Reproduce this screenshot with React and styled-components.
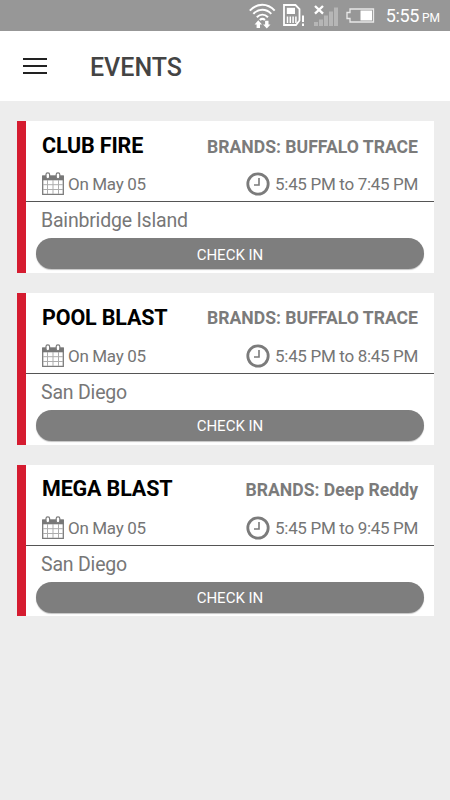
import styled, { createGlobalStyle } from "styled-components";

const events = [
  { id: 1, title: "CLUB FIRE", brand: "BUFFALO TRACE", date: "On May 05", time: "5:45 PM to 7:45 PM", place: "Bainbridge Island" },
  { id: 2, title: "POOL BLAST", brand: "BUFFALO TRACE", date: "On May 05", time: "5:45 PM to 8:45 PM", place: "San Diego" },
  { id: 3, title: "MEGA BLAST", brand: "Deep Reddy", date: "On May 05", time: "5:45 PM to 9:45 PM", place: "San Diego" },
];

function WifiIcon() {
  return (
    <svg width="28" height="26" viewBox="0 0 28 26" fill="none" stroke="#fff" strokeWidth="2">
      <path d="M.8 7.6C8-.2 18.5-.2 25.7 7.6M4.3 10.9c5.2-5.4 12.8-5.4 18 0M7.8 14.2c3.4-3.3 7.8-3.3 11.2 0M10.8 17c1.5-1.3 3.7-1.3 5.2 0" />
      <path d="M9.3 17.2l3.7 4.2h-2V25H7.6v-3.6h-2zM17.8 25.6l-3.7-4.2h2v-3.6h3.4v3.6h2z" fill="#fff" stroke="none" />
    </svg>
  );
}

function StorageIcon() {
  return (
    <svg width="22" height="23" viewBox="0 0 22 23" fill="none" stroke="#fff">
      <path d="M1 1h11.5l4 4v11.5L13 21H1z" strokeWidth="1.8" />
      <path d="M3.8 3.8H12V10H3.8z" fill="#fff" stroke="none" />
      <path d="M4.5 12.5V19M7.3 12.5V19M10.1 12.5V19M12.9 12.5V19" strokeWidth="1.5" />
      <path d="M20 11.5v6.5M20 19.5V22" strokeWidth="2" />
    </svg>
  );
}

function SignalIcon() {
  return (
    <svg width="26" height="23" viewBox="0 0 26 23">
      <path d="M2 2l8 7.6M10 2L2 9.6" stroke="#fff" strokeWidth="2.4" />
      <path d="M1 18h4v4H1zM6 15.5h4V22H6zM11 11.5h4V22h-4zM16 7.5h4V22h-4zM21 3.5h4V22h-4z" fill="#b6b6b6" />
    </svg>
  );
}

function BatteryIcon() {
  return (
    <svg width="29" height="15" viewBox="0 0 29 15">
      <path d="M4 1h23.5v13H4v-3.5H1v-6h3z" fill="none" stroke="#e8e8e8" strokeWidth="1.3" />
      <path d="M14.5 2.5H26v10H14.5z" fill="#fff" />
    </svg>
  );
}

function CalendarIcon() {
  return (
    <svg width="22" height="24" viewBox="0 0 22 24">
      <path d="M.7 4.5h20.6v17.8H.7z" fill="#fff" stroke="#7b7b7b" strokeWidth="1.3" />
      <path d="M.2 3.4h21.6v4.9H.2z" fill="#777" />
      <path d="M5.5 8v14M11 8v14M16.5 8v14M1 12.7h20M1 17.5h20" stroke="#adadad" strokeWidth="1" />
      <rect x="4" y=".8" width="3.6" height="6" rx="1.7" fill="#fff" stroke="#7b7b7b" strokeWidth="1.2" />
      <rect x="14.2" y=".8" width="3.6" height="6" rx="1.7" fill="#fff" stroke="#7b7b7b" strokeWidth="1.2" />
    </svg>
  );
}

function ClockIcon() {
  return (
    <svg width="24" height="24" viewBox="0 0 24 24" fill="none" stroke="#7b7b7b">
      <circle cx="12" cy="12" r="10.2" strokeWidth="2.8" />
      <path d="M13 6v7H8" strokeWidth="1.6" />
    </svg>
  );
}

function App() {
  return (
    <>
      <GlobalStyle />
      <StatusBar>
        <WifiIcon />
        <StorageIcon />
        <SignalIcon />
        <BatteryIcon />
        <StatusTime>
          5:55 <small>PM</small>
        </StatusTime>
      </StatusBar>
      <Header>
        <MenuButton aria-label="Menu">
          <span />
          <span />
          <span />
        </MenuButton>
        <h1>EVENTS</h1>
      </Header>
      <EventList>
        {events.map((event) => (
          <Card key={event.id}>
            <Row>
              <Title>{event.title}</Title>
              <Brand>BRANDS: {event.brand}</Brand>
            </Row>
            <Details>
              <Info $gap="4px">
                <CalendarIcon />
                {event.date}
              </Info>
              <Info $gap="5px">
                <ClockIcon />
                {event.time}
              </Info>
            </Details>
            <Place>{event.place}</Place>
            <CheckIn>CHECK IN</CheckIn>
          </Card>
        ))}
      </EventList>
    </>
  );
}

const GlobalStyle = createGlobalStyle`
  * {
    box-sizing: border-box;
  }

  body {
    margin: 0;
    min-height: 100vh;
    background: #ededed;
    font-family: Roboto, sans-serif;
  }

  svg {
    display: block;
    flex: none;
  }
`;

const StatusBar = styled.div`
  display: flex;
  justify-content: flex-end;
  align-items: center;
  height: 31px;
  padding-right: 10px;
  background: #979797;
  color: #fff;

  svg:nth-child(2) {
    margin-left: 6px;
  }

  svg:nth-child(3) {
    margin: 0 7px 0 8px;
  }
`;

const StatusTime = styled.div`
  margin-left: 11px;
  padding-top: 3px;
  font-size: 18px;
  letter-spacing: -0.4px;
  line-height: 28px;
  white-space: nowrap;

  small {
    font-size: 12px;
    letter-spacing: 0;
    margin-left: -1px;
  }
`;

const Header = styled.header`
  display: flex;
  align-items: center;
  height: 70px;
  padding-left: 23px;
  background: #fff;

  h1 {
    margin: 3px 0 0 43px;
    color: #444;
    font-size: 25px;
    font-weight: 500;
    line-height: 30px;
  }
`;

const MenuButton = styled.button`
  display: flex;
  flex-direction: column;
  gap: 5px;
  width: 24px;
  padding: 0;
  border: none;
  background: none;

  span {
    height: 2px;
    background: #222;
  }
`;

const EventList = styled.main`
  display: flex;
  flex-direction: column;
  gap: 20px;
  padding: 20.4px 16px 0 17px;
`;

const Card = styled.article`
  height: 151.6px;
  border-left: 9px solid #d51c30;
  background: #fff;
`;

const Row = styled.div`
  display: flex;
  justify-content: space-between;
  align-items: center;
  height: 48px;
  padding: 0 16px;
`;

const Title = styled.h2`
  margin: 0;
  padding-top: 0.4px;
  color: #000;
  font-size: 21.5px;
  font-weight: 700;
  letter-spacing: -0.15px;
  white-space: nowrap;
`;

const Brand = styled.div`
  padding-top: 3px;
  color: #7b7b7b;
  font-size: 17.6px;
  font-weight: 700;
  white-space: nowrap;
`;

const Details = styled.div`
  display: flex;
  justify-content: space-between;
  height: 33px;
  padding: 2px 16px 0;
  border-bottom: 1px solid #555;
`;

const Info = styled.div`
  display: flex;
  align-items: center;
  gap: ${(props) => props.$gap};
  height: 26px;
  color: #757575;
  font-size: 17px;
  letter-spacing: -0.32px;
  white-space: nowrap;
`;

const Place = styled.div`
  height: 36px;
  padding-left: 15px;
  color: #777;
  font-size: 19.5px;
  letter-spacing: -0.2px;
  line-height: 38.6px;
`;

const CheckIn = styled.button`
  display: block;
  width: calc(100% - 20px);
  height: 31px;
  margin: 0 10px;
  padding: 2px 0 0;
  border: none;
  border-radius: 16px;
  background: #7e7e7e;
  box-shadow: 0 1px 1px #c4c4c4;
  color: #fff;
  font-family: inherit;
  font-size: 15px;
`;

export default App;
